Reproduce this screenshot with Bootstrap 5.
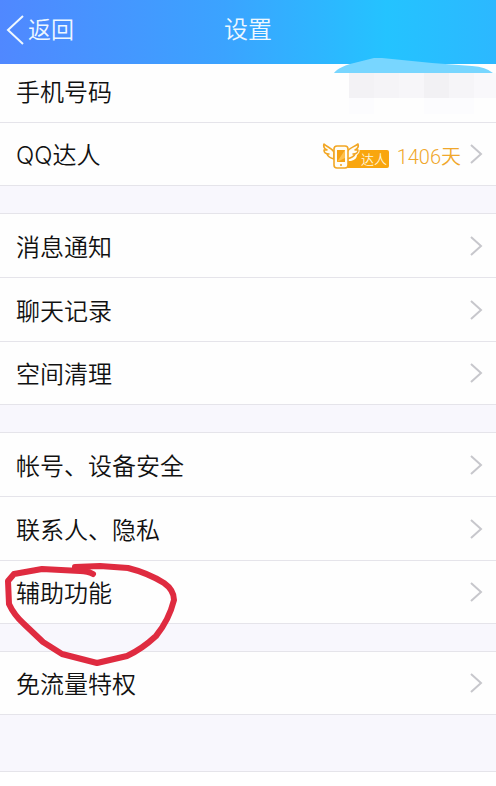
<!DOCTYPE html>
<html lang="zh-CN">
<head>
<meta charset="utf-8">
<meta name="viewport" content="width=device-width, initial-scale=1">
<title>设置</title>
<link rel="stylesheet" href="https://cdn.jsdelivr.net/npm/bootstrap@5.3.0/dist/css/bootstrap.min.css">
<style>
body { font-family: Inter, "Noto Sans CJK SC", sans-serif; font-weight: 350; background: #fff; color: #111; }
.topbar { height: 64px; padding-bottom: 4px; background: linear-gradient(90deg, #5088ff 0%, #3ba3ff 45%, #24c3ff 78%, #2cb8ff 100%); color: #fff; }
.back-btn { font-size: 23px; line-height: 32px; font-weight: 350; color: #eef8ff; padding-left: 6px; }
.page-title { font-size: 24px; line-height: 32px; font-weight: 350; color: #eef8ff; }
.settings { background: #f8f7fd; padding-bottom: 56px; gap: 27px; border-bottom: 1px solid #e5e4ea; }
.settings .list-group-item { height: 64px; padding: 0 12px 0 16px; font-size: 24px; line-height: 36px; color: #111; background: #fefefe; border-color: #e5e4ea; }
.settings .list-group-item:last-child { height: 63px; }
.settings .list-group { border-top: 1px solid #e5e4ea; border-bottom: 0; }
.settings .list-group-flush > .list-group-item:last-child { border-bottom-width: 1px; }
.settings .list-group:first-child { border-top: 0; }
.settings .phone-row { height: 59px; padding: 0 0 4px 16px; }
.row-label { padding-top: 4px; }
.days { font-family: Roboto, "Noto Sans CJK SC", sans-serif; font-size: 20px; line-height: 32px; color: #f0a72b; padding-top: 6px; }
.redacted { top: -6px; right: 0; }
.talent { margin-top: 4px; margin-right: 8px; }
.circled { z-index: 2; top: -2px; left: 0; pointer-events: none; }
</style>
<script src="https://cdn.jsdelivr.net/npm/bootstrap@5.3.0/dist/js/bootstrap.bundle.min.js"></script>
</head>
<body>
<header class="topbar row g-0 align-items-center">
  <div class="col">
    <button type="button" class="back-btn btn border-0 rounded-0 py-0 pe-0 d-flex align-items-center">
      <svg width="22" height="32" viewBox="0 0 22 32" fill="none" stroke="#eef8ff" stroke-width="2" aria-hidden="true"><path d="M17 2 2 16l15 14"/></svg>返回
    </button>
  </div>
  <h1 class="page-title col-auto m-0">设置</h1>
  <div class="col"></div>
</header>

<main class="settings d-flex flex-column">
  <div class="list-group list-group-flush rounded-0">
    <div class="phone-row list-group-item d-flex align-items-center position-relative">
      <span class="row-label">手机号码</span>
      <svg class="redacted position-absolute" width="164" height="64" viewBox="0 0 164 64" aria-hidden="true">
        <path fill="#fefefe" d="M17 15h147v40H17z"/>
        <path fill="#f3f2f5" d="M17 15h25v25H17z"/><path fill="#f5f4f7" d="M42 15h25v25H42z"/>
        <path fill="#f7f6f9" d="M67 15h25v25H67z"/><path fill="#f2f1f4" d="M92 15h25v25H92z"/>
        <path fill="#f6f5f8" d="M117 15h25v25h-25z"/><path fill="#f9f8fb" d="M142 15h22v25h-22z"/>
        <path fill="#fcfcfe" d="M17 40h25v16H17zM92 40h50v16H92z"/>
        <path fill="#78d6ff" d="M2 15c4-5 10-7 16-9L38 1q6-2 12-1l50 5 40 3q14 1 21 7z"/>
      </svg>
    </div>
    <a href="#talent" class="list-group-item list-group-item-action d-flex align-items-center">
      <span class="row-label me-auto">QQ达人</span>
      <svg class="talent" width="67" height="28" viewBox="0 0 67 28" role="img" aria-label="达人">
        <rect x="24" y="8" width="43" height="18" rx="2" fill="#f9a60e"/>
        <path d="M36 1 25 10v9h4c4-1 6-3 6-6 3-2 3-5 2-6z" fill="#fffdf5"/>
        <g fill="#fffdf5" stroke="#f2a623" stroke-width="1.600" stroke-linejoin="round">
          <path d="M12 10C10 6 5 5 2 2c-1 3 1 5 3 6H2c0 3 2 4 5 4H5c1 3 3 4 7 5z"/>
          <path d="M25 10c2-4 7-5 11-8 1 3-1 5-3 6h3c0 3-2 4-5 4h2c-1 3-4 4-8 5z"/>
          <rect x="12" y="4" width="14" height="22" rx="3"/>
        </g>
        <path fill="#f5a316" d="M15 8h8v12h-8z"/><path fill="#ffc14d" d="M23 8v8l-8 4z"/><circle cx="19" cy="23" r="1" fill="#f0a21c"/>
        <text x="39" y="22" font-size="13" fill="#fff7df">达人</text>
      </svg>
      <span class="days me-2">1406天</span>
      <svg width="15" height="22" viewBox="0 0 15 22" fill="none" stroke="#c7c7cc" stroke-width="2" aria-hidden="true"><path d="m2 2 10 9-10 9"/></svg>
    </a>
  </div>

  <div class="list-group list-group-flush rounded-0">
    <a href="#notify" class="list-group-item list-group-item-action d-flex align-items-center justify-content-between"><span class="row-label">消息通知</span>
      <svg width="15" height="22" viewBox="0 0 15 22" fill="none" stroke="#c7c7cc" stroke-width="2" aria-hidden="true"><path d="m2 2 10 9-10 9"/></svg></a>
    <a href="#history" class="list-group-item list-group-item-action d-flex align-items-center justify-content-between"><span class="row-label">聊天记录</span>
      <svg width="15" height="22" viewBox="0 0 15 22" fill="none" stroke="#c7c7cc" stroke-width="2" aria-hidden="true"><path d="m2 2 10 9-10 9"/></svg></a>
    <a href="#storage" class="list-group-item list-group-item-action d-flex align-items-center justify-content-between"><span class="row-label">空间清理</span>
      <svg width="15" height="22" viewBox="0 0 15 22" fill="none" stroke="#c7c7cc" stroke-width="2" aria-hidden="true"><path d="m2 2 10 9-10 9"/></svg></a>
  </div>

  <div class="list-group list-group-flush rounded-0">
    <a href="#security" class="list-group-item list-group-item-action d-flex align-items-center justify-content-between"><span class="row-label">帐号、设备安全</span>
      <svg width="15" height="22" viewBox="0 0 15 22" fill="none" stroke="#c7c7cc" stroke-width="2" aria-hidden="true"><path d="m2 2 10 9-10 9"/></svg></a>
    <a href="#privacy" class="list-group-item list-group-item-action d-flex align-items-center justify-content-between"><span class="row-label">联系人、隐私</span>
      <svg width="15" height="22" viewBox="0 0 15 22" fill="none" stroke="#c7c7cc" stroke-width="2" aria-hidden="true"><path d="m2 2 10 9-10 9"/></svg></a>
    <a href="#assist" class="list-group-item list-group-item-action d-flex align-items-center justify-content-between position-relative z-2"><span class="row-label">辅助功能</span>
      <svg width="15" height="22" viewBox="0 0 15 22" fill="none" stroke="#c7c7cc" stroke-width="2" aria-hidden="true"><path d="m2 2 10 9-10 9"/></svg>
      <svg class="circled position-absolute" width="190" height="112" viewBox="0 559 190 112" fill="none" stroke="#df2b40" stroke-width="6" stroke-linecap="round" stroke-linejoin="round" aria-hidden="true">
        <path d="M93 574Q88 571 80 571L42 569 14 574 8 581 9 604Q14 615 24 624L43 642 62 654 97 663 127 656Q142 649 156 636 169 620 174 600 174 590 164 583 148 573 128 568L100 566 75 567"/>
      </svg>
    </a>
  </div>

  <div class="list-group list-group-flush rounded-0">
    <a href="#free-data" class="list-group-item list-group-item-action d-flex align-items-center justify-content-between"><span class="row-label">免流量特权</span>
      <svg width="15" height="22" viewBox="0 0 15 22" fill="none" stroke="#c7c7cc" stroke-width="2" aria-hidden="true"><path d="m2 2 10 9-10 9"/></svg></a>
  </div>
</main>
</body>
</html>
